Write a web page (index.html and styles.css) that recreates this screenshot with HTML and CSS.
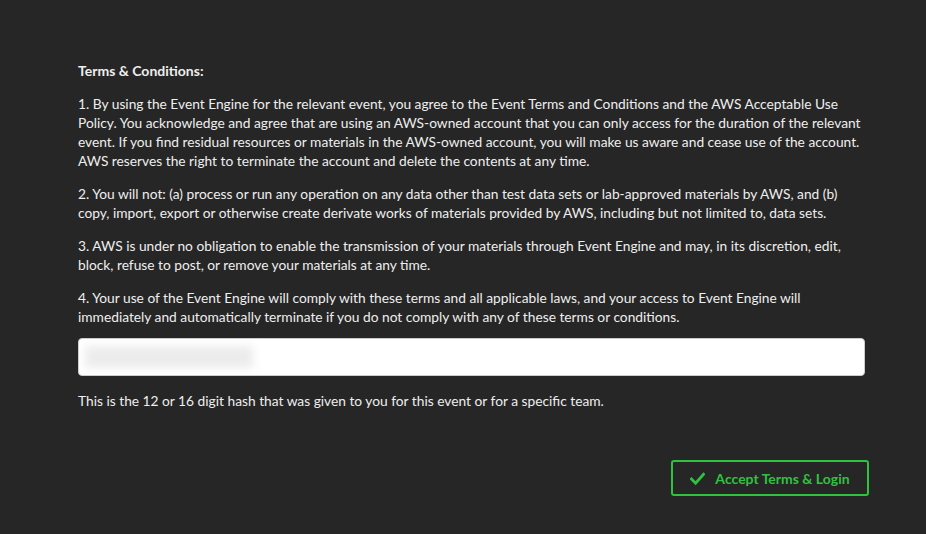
FILE: index.html
```html
<!DOCTYPE html>
<html>
<head>
<meta charset="utf-8">
<link rel="stylesheet" href="styles.css">
</head>
<body>
<main class="page">
  <section class="terms">
    <p class="heading">Terms &amp; Conditions:</p>
    <p>1. By using the Event Engine for the relevant event, you agree to the Event Terms and Conditions and the AWS Acceptable Use Policy. You acknowledge and agree that are using an AWS-owned account that you can only access for the duration of the relevant event. If you find residual resources or materials in the AWS-owned account, you will make us aware and cease use of the account. AWS reserves the right to terminate the account and delete the contents at any time.</p>
    <p>2. You will not: (a) process or run any operation on any data other than test data sets or lab-approved materials by AWS, and (b) copy, import, export or otherwise create derivate works of materials provided by AWS, including but not limited to, data sets.</p>
    <p>3. AWS is under no obligation to enable the transmission of your materials through Event Engine and may, in its discretion, edit, block, refuse to post, or remove your materials at any time.</p>
    <p>4. Your use of the Event Engine will comply with these terms and all applicable laws, and your access to Event Engine will immediately and automatically terminate if you do not comply with any of these terms or conditions.</p>
  </section>
  <div class="field">
    <div class="input"><span class="blur"></span></div>
    <p class="hint">This is the 12 or 16 digit hash that was given to you for this event or for a specific team.</p>
  </div>
  <div class="actions">
    <button class="accept">
      <svg class="check" viewBox="0 0 16 16" width="15" height="15"><path d="M1.5 8.5 L6 13 L14.5 3.5" fill="none" stroke="currentColor" stroke-width="3" stroke-linecap="square"/></svg>
      <span>Accept Terms &amp; Login</span>
    </button>
  </div>
</main>
</body>
</html>
```
FILE: styles.css
```css
html, body {
  margin: 0;
  padding: 0;
  background: #262626;
}
body {
  font-family: Lato, "Open Sans", sans-serif;
  font-size: 13.75px;
  line-height: 19px;
  color: #eeeeee;
}
.page {
  width: 787px;
  margin-left: 78px;
  padding-top: 61px;
}
.terms {
  width: 790px;
}
.terms p {
  margin: 0 0 14px;
}
.terms p:last-child {
  margin-bottom: 12px;
}
.terms .heading {
  font-size: 14px;
  font-weight: bold;
  margin-bottom: 14px;
}
.input {
  height: 36px;
  background: #fff;
  border: 1px solid #ccc;
  border-radius: 4px;
  position: relative;
  overflow: hidden;
}
.blur {
  position: absolute;
  left: 6px;
  top: 7px;
  width: 168px;
  height: 22px;
  background: #ececec;
  filter: blur(4px);
}
.hint {
  margin: 15px 0 0;
}
.actions {
  display: flex;
  justify-content: flex-end;
  margin-top: 50px;
  margin-right: -4px;
}
.accept {
  display: flex;
  align-items: center;
  gap: 10px;
  width: 198px;
  height: 36px;
  justify-content: center;
  background: transparent;
  border: 2px solid #2fc23f;
  border-radius: 3px;
  color: #2fc23f;
  font-family: Lato, sans-serif;
  font-size: 14px;
  font-weight: bold;
  padding: 0 10px;
}
.check {
  display: block;
}
```
